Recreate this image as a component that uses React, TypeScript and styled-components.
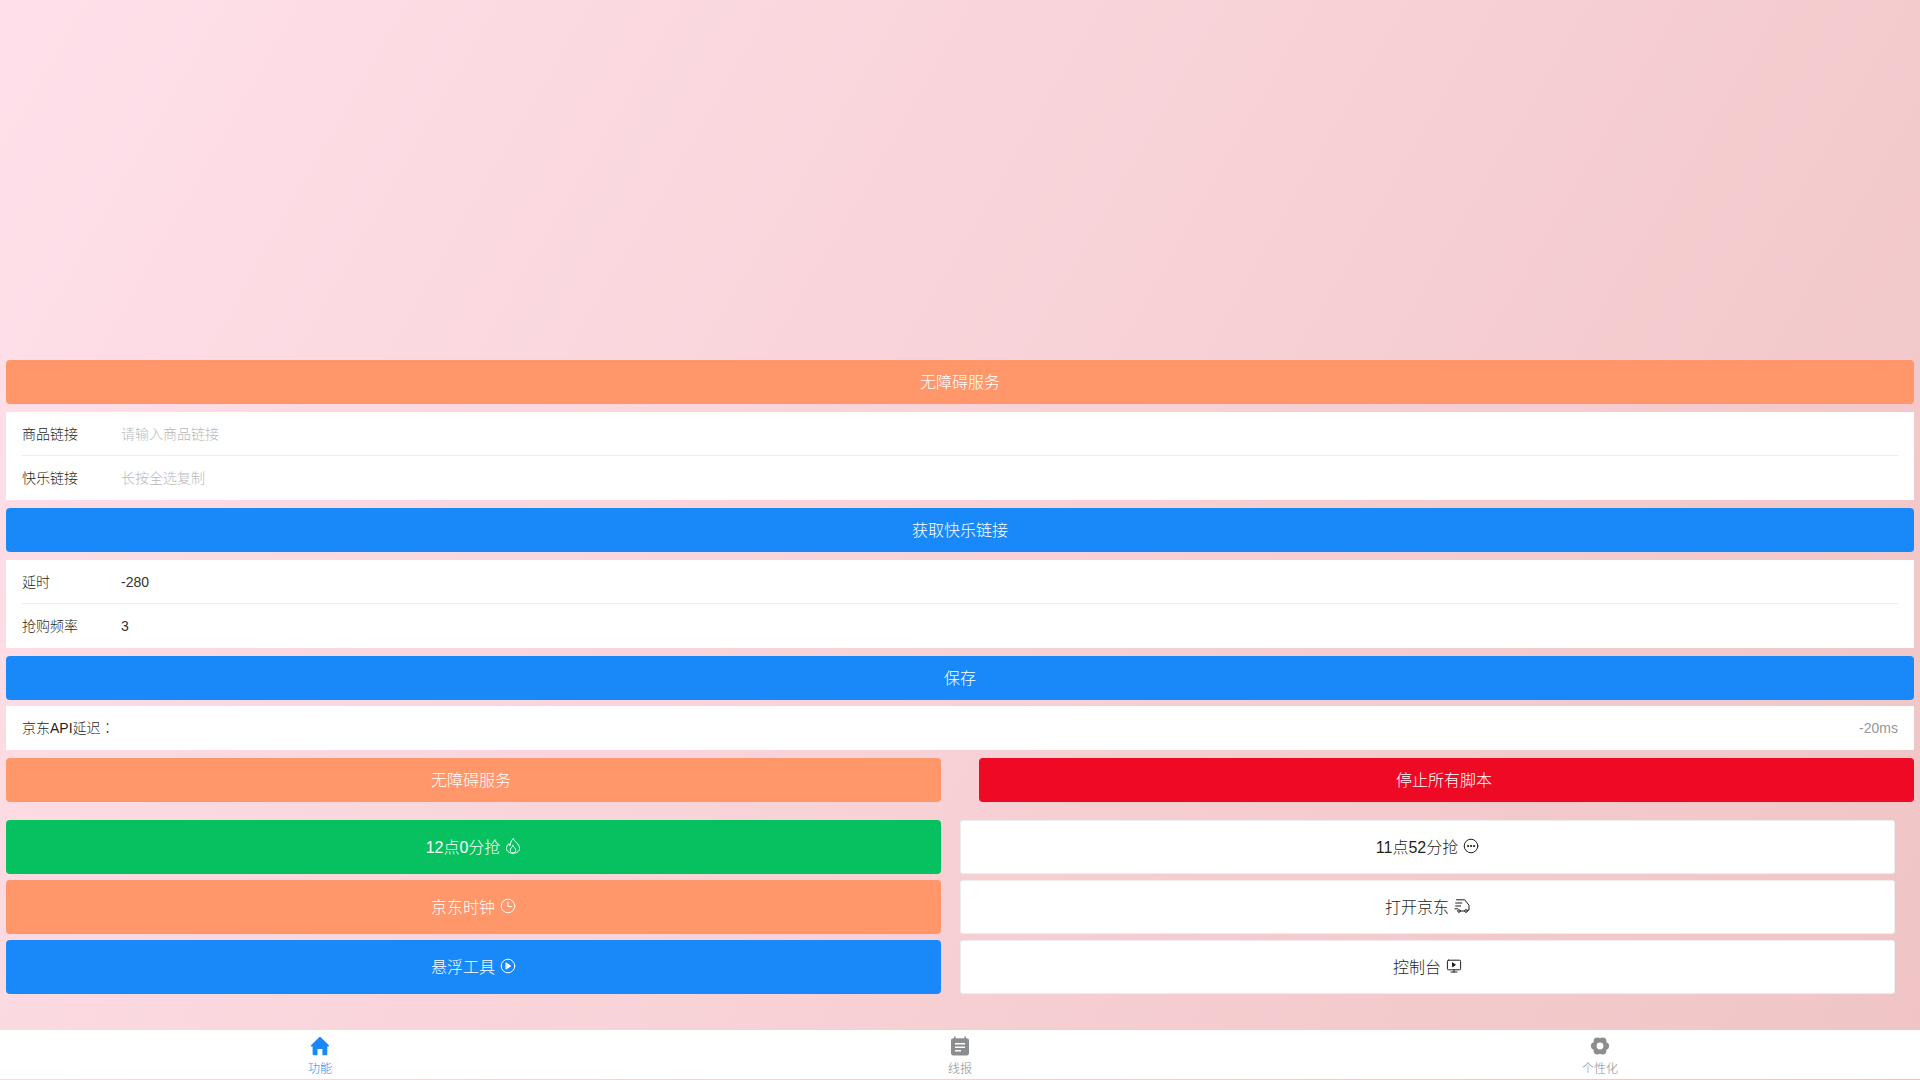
import React from "react";
import styled, { createGlobalStyle } from "styled-components";

const Global = createGlobalStyle`
  html, body { margin: 0; padding: 0; height: 100%; }
  body { font-family: "Liberation Sans", "Noto Sans CJK SC", sans-serif; font-weight: 300; color: #1f1f20; }
`;

const Page = styled.div`
  box-sizing: border-box;
  width: 1920px;
  height: 1080px;
  overflow: hidden;
  display: flex;
  flex-direction: column;
  background: linear-gradient(120deg, #ffe0ea 0%, #f0c4c4 100%);
`;

const Main = styled.main`
  flex: 1;
  min-height: 0;
  box-sizing: border-box;
  padding: 360px 6px 0;
  display: flex;
  flex-direction: column;
`;

const colors = { orange: "#ff976a", blue: "#1989fa", green: "#07c160", red: "#ee0a24", white: "#fff" };
type Tone = keyof typeof colors;

const Button = styled.button<{ $tone: Tone; $h?: number; $mb?: number; $shift?: number }>`
  box-sizing: border-box;
  border: 0;
  padding: 0 ${(p) => p.$shift ?? 0}px 2px 0;
  height: ${(p) => p.$h ?? 44}px;
  margin-bottom: ${(p) => p.$mb ?? 8}px;
  width: 100%;
  border-radius: 4px;
  display: flex;
  align-items: center;
  justify-content: center;
  gap: 5px;
  font: inherit;
  font-size: 16px;
  color: ${(p) => (p.$tone === "white" ? "#1f1f20" : "#fff")};
  background: ${(p) => colors[p.$tone]};
  box-shadow: ${(p) => (p.$tone === "white" ? "0 0 0 1px #ebedf0 inset" : "none")};
`;

const Card = styled.section<{ $mb?: number }>`
  background: #fff;
  margin-bottom: ${(p) => p.$mb ?? 8}px;
`;

const Row = styled.div<{ $line?: boolean }>`
  box-sizing: border-box;
  height: 44px;
  padding: 0 16px;
  position: relative;
  display: flex;
  align-items: center;
  font-size: 14px;
  &::after {
    content: "";
    display: ${(p) => (p.$line ? "block" : "none")};
    position: absolute;
    left: 16px;
    right: 16px;
    bottom: 0;
    border-bottom: 1px solid #ebedf0;
  }
`;

const Label = styled.span`
  width: 99px;
  flex: none;
  padding-bottom: 2px;
`;

const WideLabel = styled.span`
  flex: none;
  padding-bottom: 2px;
`;

const Colon = styled.span`
  font-family: "Noto Sans CJK TC", sans-serif;
`;

const Field = styled.input`
  flex: 1;
  border: 0;
  outline: 0;
  padding: 0;
  font: inherit;
  color: #323233;
  background: transparent;
  &::placeholder { color: #b8b9bc; opacity: 1; }
`;

const Value = styled.span`
  margin-left: auto;
  color: #969799;
`;

const TwoUp = styled.div<{ $gap: number; $mb?: number }>`
  display: grid;
  grid-template-columns: 935px 935px;
  column-gap: ${(p) => p.$gap}px;
  margin-bottom: ${(p) => p.$mb ?? 0}px;
`;

const Column = styled.div`
  display: flex;
  flex-direction: column;
  gap: 6px;
`;

const Tabbar = styled.nav`
  flex: none;
  height: 49px;
  margin-bottom: 1px;
  background: #fff;
  display: grid;
  grid-template-columns: repeat(3, 1fr);
`;

const Tab = styled.div<{ $active?: boolean }>`
  display: flex;
  flex-direction: column;
  align-items: center;
  justify-content: flex-start;
  padding-top: 5px;
  font-size: 12px;
  line-height: 16px;
  color: ${(p) => (p.$active ? "#1989fa" : "#8c8d8f")};
  svg { display: block; margin-bottom: 4px; }
`;

const Ico = styled.svg`
  width: 16px;
  height: 16px;
  flex: none;
  fill: none;
  stroke: currentColor;
  stroke-width: 1;
  stroke-linecap: round;
  stroke-linejoin: round;
`;

const Fire = () => (
  <Ico viewBox="0 0 16 16">
    <path d="M8.5.8c.2 2.5 6 5 6 9.6 0 3-2.8 4.8-6.5 4.8s-6.5-1.8-6.5-4.8c0-2 1-3.5 2.4-4.8.1 1.2.6 1.9 1.2 2.3.2-2.6 1-5.2 2.9-7.1z" />
    <path d="M8 7.6c.3 1.5 2.8 2.6 2.8 4.6 0 1.6-1.2 3-2.8 3s-2.8-1.4-2.8-3c0-2 2.2-3 2.8-4.6z" />
  </Ico>
);
const Clock = () => (
  <Ico viewBox="0 0 16 16">
    <circle cx="8" cy="8" r="6.8" />
    <path d="M8 3.8V8.6h3.4" />
  </Ico>
);
const Play = () => (
  <Ico viewBox="0 0 16 16">
    <circle cx="8" cy="8" r="6.8" />
    <path d="M6.3 5.1l4.4 2.9-4.4 2.9z" fill="currentColor" />
  </Ico>
);
const Dots = () => (
  <Ico viewBox="0 0 16 16">
    <circle cx="8" cy="8" r="6.8" />
    <circle cx="5" cy="8" r=".6" fill="currentColor" />
    <circle cx="8" cy="8" r=".6" fill="currentColor" />
    <circle cx="11" cy="8" r=".6" fill="currentColor" />
  </Ico>
);
const Truck = () => (
  <Ico viewBox="0 0 16 16">
    <path d="M2.5 1.8h8.2l4.3 5.4v5h-1.6M1.6 5h6.2M1.6 8h5M1 10.8h2.6" />
    <circle cx="5" cy="13" r="1.3" />
    <circle cx="12" cy="13" r="1.3" />
    <path d="M6.4 13h4.2" />
  </Ico>
);
const Tv = () => (
  <Ico viewBox="0 0 16 16">
    <rect x="1.4" y="2.2" width="13.2" height="9.6" rx="1" />
    <path d="M5 14h6M8 11.8V14" />
    <path d="M6.8 5l2.6 1.8-2.6 1.8z" fill="currentColor" />
  </Ico>
);

const TabSvg = styled.svg`
  width: 22px;
  height: 22px;
  fill: currentColor;
`;

const Home = () => (
  <TabSvg viewBox="0 0 22 22">
    <path d="M11 1.6L2 10.2c-.5.5-.2 1.2.5 1.2h1.1v7.6c0 .7.5 1.2 1.2 1.2h3.7v-6.1h4.9v6.1h3.7c.7 0 1.2-.5 1.2-1.2v-7.6h1.1c.7 0 1-.7.5-1.2L11 1.6z" />
  </TabSvg>
);
const Notes = () => (
  <TabSvg viewBox="0 0 22 22">
    <path fillRule="evenodd" d="M5 1.6h1.6v1.6h8.8V1.6H17v1.6h.8c1.3 0 2.2.9 2.2 2.1v13c0 1.2-.9 2.1-2.2 2.1H4.2C2.9 20.4 2 19.5 2 18.3v-13c0-1.2.9-2.1 2.2-2.1H5V1.6zM6 8v1.4h10V8H6zm0 3.5v1.4h10v-1.4H6zM6 15v1.4h6V15H6z" />
  </TabSvg>
);
const lobes = [0, 60, 120, 180, 240, 300];
const GearHole = styled.circle`
  fill: #fff;
`;
const Gear = () => (
  <TabSvg viewBox="0 0 22 22">
    <circle cx="11" cy="11" r="6.4" />
    {lobes.map((a) => (
      <circle
        key={a}
        cx={11 + 5.4 * Math.cos((a * Math.PI) / 180)}
        cy={11 + 5.4 * Math.sin((a * Math.PI) / 180)}
        r="3.7"
      />
    ))}
    <GearHole cx="11" cy="11" r="3.4" />
  </TabSvg>
);

export default function App() {
  return (
    <Page>
      <Global />
      <Main>
        <Button $tone="orange">无障碍服务</Button>
        <Card>
          <Row $line>
            <Label>商品链接</Label>
            <Field placeholder="请输入商品链接" />
          </Row>
          <Row>
            <Label>快乐链接</Label>
            <Field placeholder="长按全选复制" />
          </Row>
        </Card>
        <Button $tone="blue">获取快乐链接</Button>
        <Card>
          <Row $line>
            <Label>延时</Label>
            <Field defaultValue="-280" />
          </Row>
          <Row>
            <Label>抢购频率</Label>
            <Field defaultValue="3" />
          </Row>
        </Card>
        <Button $tone="blue" $mb={6}>保存</Button>
        <Card>
          <Row>
            <WideLabel>京东API延迟<Colon>：</Colon></WideLabel>
            <Value>-20ms</Value>
          </Row>
        </Card>
        <TwoUp $gap={38} $mb={18}>
          <Button $tone="orange" $mb={0} $shift={5}>无障碍服务</Button>
          <Button $tone="red" $mb={0} $shift={5}>停止所有脚本</Button>
        </TwoUp>
        <TwoUp $gap={19}>
          <Column>
            <Button $tone="green" $h={54} $mb={0}>12点0分抢 <Fire /></Button>
            <Button $tone="orange" $h={54} $mb={0}>京东时钟 <Clock /></Button>
            <Button $tone="blue" $h={54} $mb={0}>悬浮工具 <Play /></Button>
          </Column>
          <Column>
            <Button $tone="white" $h={54} $mb={0}>11点52分抢 <Dots /></Button>
            <Button $tone="white" $h={54} $mb={0}>打开京东 <Truck /></Button>
            <Button $tone="white" $h={54} $mb={0}>控制台 <Tv /></Button>
          </Column>
        </TwoUp>
      </Main>
      <Tabbar>
        <Tab $active><Home />功能</Tab>
        <Tab><Notes />线报</Tab>
        <Tab><Gear />个性化</Tab>
      </Tabbar>
    </Page>
  );
}
